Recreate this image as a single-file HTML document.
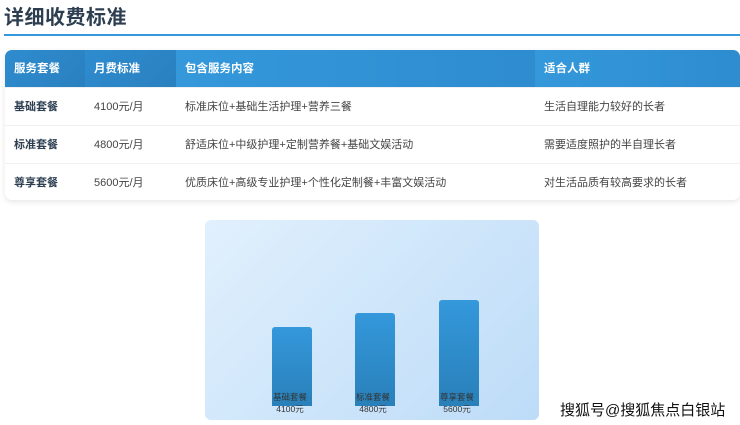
<!DOCTYPE html>
<html><head><meta charset="utf-8"><style>
*{margin:0;padding:0;box-sizing:border-box}
body{width:740px;height:425px;background:#fff;font-family:"Liberation Sans","Noto Sans CJK SC",sans-serif;position:relative;overflow:hidden;color:#2c3e50}
h1{position:absolute;left:4px;top:1px;font-size:20px;font-weight:bold;color:#2c3e50;letter-spacing:0.5px}
.line{position:absolute;left:4px;top:34px;width:736px;height:2px;background:#3498db}
.card{position:absolute;left:5px;top:50px;width:735px;height:150px;border-radius:7px;overflow:hidden;box-shadow:0 2px 6px rgba(0,0,0,.1)}
table{border-collapse:collapse;width:735px;font-size:11px}
th{height:37px;color:#fff;text-align:left;padding-left:9px;font-size:11.5px;font-weight:bold;background:linear-gradient(90deg,#3498db,#2e8ccf)}
th.d{background:linear-gradient(135deg,#2e8ccf,#2a80bf)}
td{height:38px;padding-left:9px;border-top:1px solid #eef0f2;color:#444}
td.b{font-weight:bold;color:#2c3e50}
.chart{position:absolute;left:205px;top:220px;width:334px;height:200px;border-radius:6px;background:linear-gradient(135deg,#e1f0fd,#bddcf8)}
.bar{position:absolute;width:40px;bottom:14px;border-radius:3px 3px 0 0;background:linear-gradient(180deg,#3498db,#2980b9)}
.lb{position:absolute;width:60px;text-align:center;font-size:8.5px;color:#333;line-height:12px}
.wm{position:absolute;left:560px;top:399px;font-size:15px;color:#111;text-shadow:0 0 1px #fff,1px 1px 0 #fff,-1px -1px 0 #fff}
</style></head><body>
<h1>详细收费标准</h1>
<div class="line"></div>
<div class="card"><table>
<tr><th class="d" style="width:80px">服务套餐</th><th class="d" style="width:91px">月费标准</th><th style="width:359px">包含服务内容</th><th>适合人群</th></tr>
<tr><td class="b">基础套餐</td><td>4100元/月</td><td>标准床位+基础生活护理+营养三餐</td><td>生活自理能力较好的长者</td></tr>
<tr><td class="b">标准套餐</td><td>4800元/月</td><td>舒适床位+中级护理+定制营养餐+基础文娱活动</td><td>需要适度照护的半自理长者</td></tr>
<tr><td class="b">尊享套餐</td><td>5600元/月</td><td>优质床位+高级专业护理+个性化定制餐+丰富文娱活动</td><td>对生活品质有较高要求的长者</td></tr>
</table></div>
<div class="chart">
<div class="bar" style="left:67px;height:79px"></div>
<div class="bar" style="left:150px;height:93px"></div>
<div class="bar" style="left:234px;height:106px"></div>
<div class="lb" style="left:55px;top:171px">基础套餐<br>4100元</div>
<div class="lb" style="left:138px;top:171px">标准套餐<br>4800元</div>
<div class="lb" style="left:222px;top:171px">尊享套餐<br>5600元</div>
</div>
<div class="wm">搜狐号@搜狐焦点白银站</div>
</body></html>
